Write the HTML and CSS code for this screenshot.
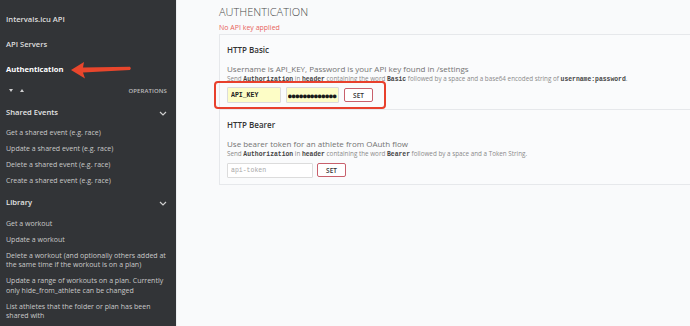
FILE: index.html
```html
<!DOCTYPE html>
<html lang="en">
<head>
    <meta charset="UTF-8">
    <meta name="viewport" content="width=device-width, initial-scale=1.0">
    <title>Intervals.icu API</title>
    <link rel="stylesheet" href="styles.css">
</head>
<body>
    <div class="page">
        <nav class="sidebar">
            <a class="nav-link">Intervals.icu API</a>
            <a class="nav-link">API Servers</a>
            <a class="nav-link active">Authentication</a>

            <div class="ops-bar">
                <span class="toggles"><span class="tri down"></span><span class="tri up"></span></span>
                <span class="ops-label">OPERATIONS</span>
            </div>

            <div class="group">
                <div class="group-head">
                    <span>Shared Events</span>
                    <svg class="chev" width="8" height="5" viewBox="0 0 8 5"><path d="M1 1 L4 4 L7 1" fill="none" stroke="#cfcfcf" stroke-width="1.2"/></svg>
                </div>
                <ul class="ops">
                    <li>Get a shared event (e.g. race)</li>
                    <li>Update a shared event (e.g. race)</li>
                    <li>Delete a shared event (e.g. race)</li>
                    <li>Create a shared event (e.g. race)</li>
                </ul>
            </div>

            <div class="group">
                <div class="group-head">
                    <span>Library</span>
                    <svg class="chev" width="8" height="5" viewBox="0 0 8 5"><path d="M1 1 L4 4 L7 1" fill="none" stroke="#cfcfcf" stroke-width="1.2"/></svg>
                </div>
                <ul class="ops">
                    <li>Get a workout</li>
                    <li>Update a workout</li>
                    <li>Delete a workout (and optionally others added at the same time if the workout is on a plan)</li>
                    <li>Update a range of workouts on a plan. Currently only hide_from_athlete can be changed</li>
                    <li>List athletes that the folder or plan has been shared with</li>
                </ul>
            </div>

            <!-- annotation arrow pointing at the Authentication link -->
            <svg class="pointer" width="64" height="20" viewBox="0 0 64 20">
                <path d="M1 10 L14 2 L13 7.4 L60 6.8 Q61.8 8.4 60 10 L13 12.4 L15 18.5 Z" fill="#e8462c"/>
            </svg>
        </nav>

        <main class="content">
            <h2 class="title">Authentication</h2>
            <p class="status">No API key applied</p>

            <div class="auth-box">
                <section class="scheme">
                    <h3>HTTP Basic</h3>
                    <p class="desc">Username is API_KEY, Password is your API key found in /settings</p>
                    <p class="hint">Send <code>Authorization</code> in <code>header</code> containing the word <code>Basic</code> followed by a space and a base64 encoded string of <code>username:password</code>.</p>
                    <div class="fields">
                        <input class="field filled user" type="text" value="API_KEY">
                        <input class="field filled pass" type="text" value="●●●●●●●●●●●●●">
                        <button class="set-btn" type="button">SET</button>
                        <span class="highlight"></span>
                    </div>
                </section>

                <section class="scheme">
                    <h3>HTTP Bearer</h3>
                    <p class="desc">Use bearer token for an athlete from OAuth flow</p>
                    <p class="hint">Send <code>Authorization</code> in <code>header</code> containing the word <code>Bearer</code> followed by a space and a Token String.</p>
                    <div class="fields">
                        <input class="field token" type="text" placeholder="api-token">
                        <button class="set-btn" type="button">SET</button>
                    </div>
                </section>
            </div>
        </main>
    </div>
</body>
</html>
```

FILE: styles.css
```css
* {
    margin: 0;
    padding: 0;
    box-sizing: border-box;
}

body {
    overflow: hidden;
    font-family: 'Open Sans', 'Liberation Sans', sans-serif;
    background-color: #f9fafb;
}

.page {
    display: flex;
    height: 100vh;
}

/* sidebar */
.sidebar {
    position: relative;
    flex: none;
    width: 176px;
    padding-top: 7px;
    background-color: #323437;
    color: #d6d6d6;
    display: flex;
    flex-direction: column;
}

.nav-link {
    display: block;
    height: 25px;
    line-height: 25px;
    padding-left: 6px;
    font-size: 7.6px;
    font-weight: 600;
    color: #dedede;
}

.nav-link.active {
    color: #fff;
    font-weight: 700;
}

.ops-bar {
    display: flex;
    align-items: center;
    justify-content: space-between;
    height: 18px;
    padding: 0 9px 0 9px;
}

.toggles {
    display: flex;
    align-items: center;
    gap: 7px;
}

.tri {
    width: 0;
    height: 0;
    border-left: 2.5px solid transparent;
    border-right: 2.5px solid transparent;
}

.tri.down {
    border-top: 3px solid #d0d0d0;
}

.tri.up {
    border-bottom: 3px solid #d0d0d0;
}

.ops-label {
    font-size: 6px;
    font-weight: 600;
    color: #bdbdbd;
    letter-spacing: 0.1px;
}

.group-head {
    display: flex;
    align-items: center;
    justify-content: space-between;
    height: 24px;
    padding: 0 9px 0 6px;
    font-size: 7.6px;
    font-weight: 600;
    color: #e4e4e4;
}

.chev {
    margin-top: 3px;
}

.ops {
    list-style: none;
    padding: 1px 0 2px;
}

.ops li {
    padding: 3.2px 10px 3.2px 6px;
    line-height: 9.6px;
    font-size: 7px;
    color: #c9c9c9;
}

.pointer {
    position: absolute;
    left: 70px;
    top: 60px;
}

/* main */
.content {
    flex: 1;
    min-width: 0;
    overflow: hidden;
    padding-left: 42px;
    border-left: 1px solid #eceef0;
}

.title {
    padding-top: 5px;
    font-size: 11px;
    line-height: 14px;
    font-weight: 300;
    color: #4a4a4a;
    text-transform: uppercase;
}

.status {
    margin-top: 3.5px;
    font-size: 7px;
    line-height: 9px;
    color: #e8635c;
}

.auth-box {
    margin-top: 2.5px;
    margin-right: -20px;
    border: 1px solid #e6e8eb;
    background-color: #fafbfc;
}

.scheme {
    padding: 9px 7px 6px;
}

.scheme + .scheme {
    border-top: 1px solid #e6e8eb;
}

.scheme h3 {
    font-size: 8px;
    line-height: 12px;
    font-weight: 600;
    color: #333;
}

.desc {
    margin-top: 6.5px;
    font-size: 8px;
    line-height: 11px;
    color: #737373;
}

.hint {
    font-size: 6.3px;
    line-height: 9px;
    color: #8a8a8a;
}

.hint code {
    font-family: 'Liberation Mono', 'DejaVu Sans Mono', monospace;
    font-weight: 700;
    font-size: 6.4px;
    color: #444;
}

.fields {
    position: relative;
    display: flex;
    align-items: center;
    gap: 5px;
    margin-top: 3.5px;
    height: 16px;
}

.field {
    height: 16px;
    border: 1px solid #dcdcdc;
    border-radius: 1px;
    padding: 0 3px;
    font-family: 'Liberation Mono', 'DejaVu Sans Mono', monospace;
    font-size: 6.5px;
    color: #222;
    background-color: #fff;
}

.field.filled {
    background-color: #fdfdc6;
    font-weight: 700;
}

.field.user {
    width: 54px;
}

.field.pass {
    width: 53px;
    padding: 0 1px;
    font-family: 'DejaVu Sans Mono', monospace;
    font-weight: 400;
    font-size: 6.2px;
    color: #1a1a1a;
}

.field.token {
    width: 86px;
    height: 15px;
}

.field.token::placeholder {
    color: #a8a8a8;
}

.fields .token + .set-btn {
    margin-left: -1px;
}

.set-btn {
    width: 29px;
    height: 14px;
    border: 1px solid #c8606c;
    border-radius: 2px;
    background-color: #fff;
    font-family: 'Open Sans', 'Liberation Sans', sans-serif;
    font-size: 6.5px;
    font-weight: 600;
    color: #333;
}

/* red annotation frame around the basic auth fields */
.highlight {
    position: absolute;
    left: -13px;
    top: -6px;
    width: 172px;
    height: 28px;
    border: 2px solid #e8402c;
    border-radius: 4px;
}
```
